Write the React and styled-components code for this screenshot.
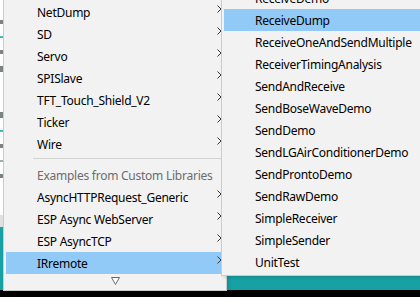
import React from "react";
import styled, { createGlobalStyle } from "styled-components";

const GlobalStyle = createGlobalStyle`
  html, body { margin: 0; padding: 0; width: 420px; height: 297px; overflow: hidden; background: #fff; }
  body { font-family: "Noto Sans", "Open Sans", sans-serif; }
`;

const Screen = styled.div`
  position: relative;
  width: 420px;
  height: 297px;
  overflow: hidden;
  display: grid;
  grid-template-rows: 215px 12px 63px 7px;
`;

const Editor = styled.div`
  background: #fff;
  display: flex;
  flex-direction: column;
  gap: 12px;
  padding-top: 20px;
`;

const CodeMark = styled.div`
  width: 3px;
  height: ${(p) => p.$h || 2}px;
  background: ${(p) => p.$color || "#434f54"};
  opacity: 0.7;
`;

const Gutter = styled.div`
  background: #e0e0e0;
`;

const StatusBar = styled.div`
  background: #17a1a5;
`;

const Console = styled.div`
  background: #000;
`;

const Menu = styled.div`
  position: absolute;
  left: ${(p) => p.$left}px;
  top: ${(p) => p.$top}px;
  width: ${(p) => p.$width}px;
  box-sizing: border-box;
  background: #f2f2f2;
  border: 1px solid #cccccc;
  padding: 2px;
  display: flex;
  flex-direction: column;
  box-shadow: 2px 2px 3px rgba(0, 0, 0, 0.12);
`;

const Item = styled.div`
  position: relative;
  height: 22px;
  display: flex;
  align-items: center;
  padding-left: 31px;
  font-size: 12px;
  letter-spacing: -0.25px;
  color: ${(p) => (p.$header ? "#6d6d6d" : "#000")};
  background: ${(p) => (p.$active ? "#91c9f7" : "transparent")};
  white-space: nowrap;
`;

const Arrow = styled.svg`
  position: absolute;
  right: 2px;
  top: 4px;
  width: 5px;
  height: 8px;
`;

const Separator = styled.div`
  height: 9px;
  display: flex;
  align-items: flex-start;
  padding-left: 27px;
  &::after {
    content: "";
    flex: 1;
    height: 1px;
    margin-top: 3px;
    background: #d2d2d2;
  }
`;

const ScrollDown = styled.div`
  height: 14px;
  display: flex;
  justify-content: center;
  align-items: center;
`;

const Chevron = () => (
  <Arrow viewBox="0 0 5 8">
    <path d="M0.5 0.5 L4 4 L0.5 7.5" fill="none" stroke="#333" strokeWidth="1" />
  </Arrow>
);

const leftItems = [
  "NetDump",
  "SD",
  "Servo",
  "SPISlave",
  "TFT_Touch_Shield_V2",
  "Ticker",
  "Wire",
];

const customItems = [
  "AsyncHTTPRequest_Generic",
  "ESP Async WebServer",
  "ESP AsyncTCP",
  "IRremote",
];

const rightItems = [
  "ReceiveDemo",
  "ReceiveDump",
  "ReceiveOneAndSendMultiple",
  "ReceiverTimingAnalysis",
  "SendAndReceive",
  "SendBoseWaveDemo",
  "SendDemo",
  "SendLGAirConditionerDemo",
  "SendProntoDemo",
  "SendRawDemo",
  "SimpleReceiver",
  "SimpleSender",
  "UnitTest",
];

const marks = [
  ["#434f54", 4],
  ["#00979c", 2],
  ["#434f54", 4],
  ["#434f54", 6],
  ["#ffffff", 2],
  ["#ffffff", 2],
  ["#434f54", 6],
  ["#00979c", 2],
  ["#434f54", 4],
  ["#7a8a8f", 2],
  ["#434f54", 4],
];

export default function App() {
  return (
    <>
      <GlobalStyle />
      <Screen>
        <Editor>
          {marks.map(([c, h], i) => (
            <CodeMark key={i} $color={c} $h={h} />
          ))}
        </Editor>
        <Gutter />
        <StatusBar />
        <Console />

        <Menu $left={3} $top={-2} $width={224}>
          {leftItems.map((t) => (
            <Item key={t}>
              {t}
              <Chevron />
            </Item>
          ))}
          <Separator />
          <Item $header>Examples from Custom Libraries</Item>
          {customItems.map((t) => (
            <Item key={t} $active={t === "IRremote"}>
              {t}
              <Chevron />
            </Item>
          ))}
          <ScrollDown>
            <svg width="9" height="8" viewBox="0 0 9 8">
              <path d="M0.5 0.5 H8.5 L4.5 7.5 Z" fill="#fff" stroke="#6a6a6a" strokeWidth="1" />
            </svg>
          </ScrollDown>
        </Menu>

        <Menu $left={221} $top={-16} $width={220}>
          {rightItems.map((t) => (
            <Item key={t} $active={t === "ReceiveDump"}>
              {t}
            </Item>
          ))}
        </Menu>
      </Screen>
    </>
  );
}
